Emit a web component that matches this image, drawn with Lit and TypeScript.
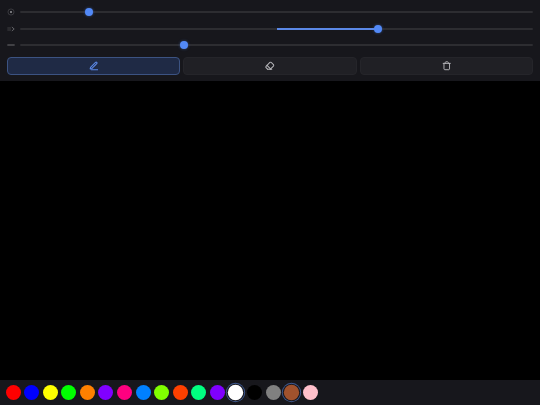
import { LitElement, html, css, svg } from "lit";
import { customElement } from "lit/decorators.js";

const COLORS = ["#ff0000","#0000ff","#ffff00","#00ff00","#ff8000","#8000ff","#ff0080","#0080ff","#80ff00","#ff4000","#00ff80","#8000ff","#ffffff","#000000","#808080","#a0522d","#ffc0cb"];
const SELECTED = new Set([12, 15]);

const ICONS = [
  svg`<circle cx="6" cy="6" r="4.6" fill="none" stroke="#4c4c50" stroke-width="1"/><rect x="4.8" y="4.8" width="2.4" height="2.4" fill="#a8a8ac"/>`,
  svg`<path d="M0.5 4.5H6.2M0.5 7.5H6.2" fill="none" stroke="#5c5c60" stroke-width="0.9"/><path d="M7.2 3L10.8 6L7.2 9" fill="none" stroke="#8a8a8e" stroke-width="1"/>`,
  svg`<path d="M0.5 6H11.5" fill="none" stroke="#98989c" stroke-width="1"/>`,
];

@customElement("app-root")
export class AppRoot extends LitElement {
  static styles = css`
    :host { display: flex; flex-direction: column; width: 540px; height: 405px; background: #000; overflow: hidden; font-family: "Liberation Sans", sans-serif; }
    .panel { background: #17171c; padding: 3.55px 6.67px 6px; display: flex; flex-direction: column; height: 81px; box-sizing: border-box; }
    .row { display: flex; align-items: center; height: 16.67px; gap: 5.3px; }
    .ico { width: 8px; height: 8px; flex: none; display: block; }
    .track { position: relative; flex: 1; height: 2px; background: #2d2d31; border-radius: 1px; }
    .fill { position: absolute; top: 0; height: 100%; background: #5b88e6; }
    .thumb { position: absolute; top: 50%; width: 8px; height: 8px; margin: -4px 0 0 -4px; border-radius: 50%; background: #5289f7; box-shadow: 0 0 3px rgba(82,137,247,.45); }
    .buttons { display: flex; gap: 3.33px; margin-top: 3.45px; }
    .btn { flex: 1; height: 18px; box-sizing: border-box; border-radius: 4px; background: #202025; border: 0.67px solid #25252a; display: flex; align-items: center; justify-content: center; color: #b4b4b8; }
    .btn.on { background: #1f2a45; border-color: #3c5382; color: #5b88e6; }
    .btn svg { width: 9.5px; height: 9.5px; display: block; }
    .spacer { flex: 1; }
    .palette { height: 25px; background: #17171c; display: flex; align-items: center; gap: 3.58px; padding: 0 5.5px; box-sizing: border-box; }
    .sw { width: 15px; height: 15px; border-radius: 50%; flex: none; box-sizing: border-box; }
    .sw.sel { transform: scale(1.03); box-shadow: 0 0 0 1px #17171c, 0 0 0 1.9px #3f5a92; }
  `;

  private slider(icon: number, pos: number, from?: number) {
    return html`<div class="row">
      <svg class="ico" viewBox="0 0 12 12">${ICONS[icon]}</svg>
      <div class="track">
        ${from !== undefined ? html`<div class="fill" style="left:${from}%;width:${pos - from}%"></div>` : ""}
        <div class="thumb" style="left:${pos}%"></div>
      </div>
    </div>`;
  }

  render() {
    return html`
      <div class="panel">
        ${this.slider(0, 13.45)}
        ${this.slider(1, 69.8, 50)}
        ${this.slider(2, 32)}
        <div class="buttons">
          <div class="btn on"><svg viewBox="0 0 24 24" fill="none" stroke="currentColor" stroke-width="2.8" stroke-linecap="round" stroke-linejoin="round"><path d="M6 22h16"/><path d="M16.5 3.5a2.12 2.12 0 0 1 3 3L7 19l-4 1 1-4Z"/></svg></div>
          <div class="btn"><svg viewBox="0 0 24 24" fill="none" stroke="currentColor" stroke-width="2.6" stroke-linecap="round" stroke-linejoin="round"><path d="m7 21-4.3-4.3c-1-1-1-2.5 0-3.4l9.6-9.6c1-1 2.5-1 3.4 0l5.6 5.6c1 1 1 2.5 0 3.4L13 21"/><path d="M17 21H7"/><path d="m5 11 9 9"/></svg></div>
          <div class="btn"><svg viewBox="0 0 24 24" fill="none" stroke="currentColor" stroke-width="2.4" stroke-linecap="round" stroke-linejoin="round"><path d="M3 6h18"/><path d="M19 6v14c0 1-1 2-2 2H7c-1 0-2-1-2-2V6"/><path d="M8 6V4c0-1 1-2 2-2h4c1 0 2 1 2 2v2"/></svg></div>
        </div>
      </div>
      <div class="spacer"></div>
      <div class="palette">
        ${COLORS.map((c, i) => html`<div class="sw ${SELECTED.has(i) ? "sel" : ""}" style="background:${c}"></div>`)}
      </div>
    `;
  }
}
